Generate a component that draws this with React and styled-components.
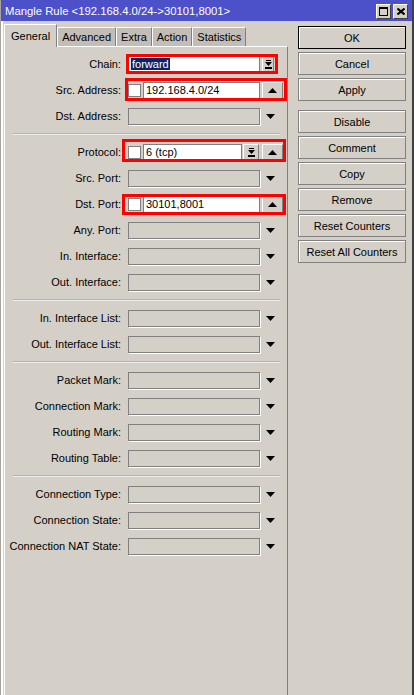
import React from 'react';
import styled, {createGlobalStyle} from 'styled-components';

const GlobalStyle = createGlobalStyle`
  html, body {
    margin: 0;
    padding: 0;
    background: #d4d0c8;
  }
  body {
    font-family: Tahoma, "Liberation Sans", Arial, sans-serif;
    font-size: 11px;
    color: #000;
  }
`;

const SWindow = styled.div`
  width: 414px;
  height: 695px;
  overflow: hidden;
  box-sizing: border-box;
  background: #d4d0c8;
  border-left: 1px solid #a8a49c;
  border-right: 2px solid #404040;
  display: flex;
  flex-direction: column;
`;

const STitleBar = styled.div`
  height: 21px;
  flex-shrink: 0;
  background: #4c50c9;
  display: flex;
  align-items: center;
  padding: 0 4px 0 4px;
  box-sizing: border-box;
`;

const STitle = styled.div`
  flex: 1;
  color: #fff;
  font-size: 11.3px;
  white-space: nowrap;
  padding-top: 1px;
`;

const STitleButton = styled.div`
  width: 15px;
  height: 15px;
  margin-left: 2px;
  margin-top: 2px;
  background: #d4d0c8;
  border: 1px solid;
  border-color: #fff #404040 #404040 #fff;
  box-sizing: border-box;
  display: flex;
  align-items: center;
  justify-content: center;
`;

const SBody = styled.div`
  flex: 1;
  display: flex;
  flex-direction: row;
  border-left: 2px solid #fff;
`;

const STabArea = styled.div`
  width: 284px;
  display: flex;
  flex-direction: column;
  padding-left: 1px;
`;

const STabStrip = styled.div`
  display: flex;
  flex-direction: row;
  align-items: flex-end;
  height: 25px;
  position: relative;
  z-index: 1;
`;

const STab = styled.div`
  box-sizing: border-box;
  height: ${(p) => (p.active ? '23px' : '19px')};
  margin-bottom: ${(p) => (p.active ? '-1px' : '0')};
  padding: 0 ${(p) => (p.active ? '6px' : '4px')};
  display: flex;
  align-items: center;
  background: ${(p) => (p.active ? '#d4d0c8' : '#c2beb7')};
  border-left: 1px solid #fff;
  border-top: 1px solid #fff;
  border-right: 1px solid #808080;
  white-space: nowrap;
  font-size: 11px;
`;

const SPanel = styled.div`
  flex: 1;
  border-top: 1px solid #fff;
  border-left: 1px solid #fff;
  border-right: 1px solid #808080;
  padding-top: 4px;
`;

const SRow = styled.div`
  display: flex;
  flex-direction: row;
  align-items: center;
  height: 26px;
`;

const SLabel = styled.div`
  width: 116px;
  text-align: right;
  margin-right: 7px;
  white-space: nowrap;
`;

const SControl = styled.div`
  position: relative;
  display: flex;
  flex-direction: row;
  align-items: center;
  width: 156px;
  height: 100%;
`;

const SEmptyField = styled.div`
  width: 132px;
  height: 17px;
  box-sizing: border-box;
  border: 1px solid #808080;
  box-shadow: 1px 1px 0 #fff;
  background: #d4d0c8;
`;

const STextField = styled.div`
  width: ${(p) => p.width}px;
  height: 17px;
  box-sizing: border-box;
  border: 1px solid #808080;
  background: #fff;
  display: flex;
  align-items: center;
  padding-left: 2px;
  white-space: nowrap;
  overflow: hidden;
`;

const SSelected = styled.span`
  background: #0a246a;
  color: #fff;
  padding: 0 1px;
`;

const SCheck = styled.div`
  width: 13px;
  height: 13px;
  box-sizing: border-box;
  border: 1px solid #808080;
  background: #fff;
  margin-right: 2px;
`;

const SArrowSlot = styled.div`
  width: 16px;
  margin-left: 2px;
  display: flex;
  align-items: center;
  justify-content: center;
`;

const SRaised = styled.div`
  width: ${(p) => p.width}px;
  height: 17px;
  margin-left: ${(p) => p.gap || 0}px;
  box-sizing: border-box;
  border: 1px solid;
  border-color: #fff #808080 #808080 #fff;
  background: #d4d0c8;
  display: flex;
  align-items: center;
  justify-content: center;
`;

const SMark = styled.div`
  position: absolute;
  border: 3px solid #f00;
  box-sizing: border-box;
  pointer-events: none;
`;

const SSeparator = styled.div`
  height: 10px;
  display: flex;
  align-items: center;
  padding: 0 7px 0 8px;

  &::before {
    content: '';
    flex: 1;
    height: 0;
    border-top: 1px solid #b8b4ac;
    border-bottom: 1px solid #f0eee8;
  }
`;

const SButtonColumn = styled.div`
  width: 108px;
  margin-left: 10px;
  padding-top: 5px;
  display: flex;
  flex-direction: column;
`;

const SButton = styled.div`
  height: 23px;
  box-sizing: border-box;
  margin-bottom: 3px;
  margin-top: ${(p) => (p.spaced ? '6px' : '0')};
  border: 1px solid ${(p) => (p.primary ? '#000' : '#808080')};
  box-shadow: inset 1px 1px 0 #fff;
  background: #d4d0c8;
  display: flex;
  align-items: center;
  justify-content: center;
  white-space: nowrap;
  font-size: 11px;
`;

const DownArrow = () => (
  <svg width='9' height='5' viewBox='0 0 9 5'>
    <polygon points='0,0 9,0 4.5,5' fill='#000'/>
  </svg>
);

const UpArrow = () => (
  <svg width='9' height='5' viewBox='0 0 9 5'>
    <polygon points='0,5 9,5 4.5,0' fill='#000'/>
  </svg>
);

const DropArrow = () => (
  <svg width='7' height='9' viewBox='0 0 7 9'>
    <rect x='1' y='0' width='5' height='1' fill='#000'/>
    <polygon points='0,2 7,2 3.5,6' fill='#000'/>
    <rect x='0' y='7' width='7' height='2' fill='#000'/>
  </svg>
);

const EmptyRow = ({label}) => (
  <SRow>
    <SLabel>{label}</SLabel>
    <SControl>
      <SEmptyField/>
      <SArrowSlot><DownArrow/></SArrowSlot>
    </SControl>
  </SRow>
);

const groups = [
  ['Src. Port:', 'Any. Port:', 'In. Interface:', 'Out. Interface:'],
  ['In. Interface List:', 'Out. Interface List:'],
  ['Packet Mark:', 'Connection Mark:', 'Routing Mark:', 'Routing Table:'],
  ['Connection Type:', 'Connection State:', 'Connection NAT State:'],
];

const tabs = ['General', 'Advanced', 'Extra', 'Action', 'Statistics'];

const buttons = [
  {text: 'OK', primary: true},
  {text: 'Cancel'},
  {text: 'Apply'},
  {text: 'Disable', spaced: true},
  {text: 'Comment'},
  {text: 'Copy'},
  {text: 'Remove'},
  {text: 'Reset Counters'},
  {text: 'Reset All Counters'},
];

export default class App extends React.Component {
  render() {
    return (
      <SWindow>
        <GlobalStyle/>
        <STitleBar>
          <STitle>Mangle Rule &lt;192.168.4.0/24-&gt;30101,8001&gt;</STitle>
          <STitleButton>
            <svg width='9' height='9' viewBox='0 0 9 9'>
              <rect x='0.5' y='0.5' width='8' height='8' fill='none' stroke='#000'/>
              <rect x='0' y='0' width='9' height='2' fill='#000'/>
            </svg>
          </STitleButton>
          <STitleButton>
            <svg width='8' height='7' viewBox='0 0 8 7'>
              <path d='M0.5 0.5 L7.5 6.5 M7.5 0.5 L0.5 6.5' stroke='#000' strokeWidth='2'/>
            </svg>
          </STitleButton>
        </STitleBar>
        <SBody>
          <STabArea>
            <STabStrip>
              {tabs.map((t, i) => (
                <STab key={t} active={i === 0}>{t}</STab>
              ))}
            </STabStrip>
            <SPanel>
              <SRow>
                <SLabel>Chain:</SLabel>
                <SControl>
                  <STextField width={132}><SSelected>forward</SSelected></STextField>
                  <SRaised width={12} gap={2}><DropArrow/></SRaised>
                  <SMark style={{left: -2, top: 3, width: 152, height: 20}}/>
                </SControl>
              </SRow>
              <SRow>
                <SLabel>Src. Address:</SLabel>
                <SControl>
                  <SCheck/>
                  <STextField width={117}>192.168.4.0/24</STextField>
                  <SRaised width={21} gap={2}><UpArrow/></SRaised>
                  <SMark style={{left: -3, top: 1, width: 162, height: 23}}/>
                </SControl>
              </SRow>
              <EmptyRow label='Dst. Address:'/>
              <SSeparator/>
              <SRow>
                <SLabel>Protocol:</SLabel>
                <SControl>
                  <SCheck/>
                  <STextField width={99}>6 (tcp)</STextField>
                  <SRaised width={16} gap={1}><DropArrow/></SRaised>
                  <SRaised width={21} gap={3}><UpArrow/></SRaised>
                  <SMark style={{left: -6, top: 0, width: 164, height: 23}}/>
                </SControl>
              </SRow>
              <EmptyRow label={groups[0][0]}/>
              <SRow>
                <SLabel>Dst. Port:</SLabel>
                <SControl>
                  <SCheck/>
                  <STextField width={117}>30101,8001</STextField>
                  <SRaised width={21} gap={2}><UpArrow/></SRaised>
                  <SMark style={{left: -6, top: 3, width: 164, height: 21}}/>
                </SControl>
              </SRow>
              {groups[0].slice(1).map((l) => <EmptyRow key={l} label={l}/>)}
              {groups.slice(1).map((g, i) => (
                <React.Fragment key={i}>
                  <SSeparator/>
                  {g.map((l) => <EmptyRow key={l} label={l}/>)}
                </React.Fragment>
              ))}
            </SPanel>
          </STabArea>
          <SButtonColumn>
            {buttons.map((b) => (
              <SButton key={b.text} primary={b.primary} spaced={b.spaced}>{b.text}</SButton>
            ))}
          </SButtonColumn>
        </SBody>
      </SWindow>
    );
  }
}
